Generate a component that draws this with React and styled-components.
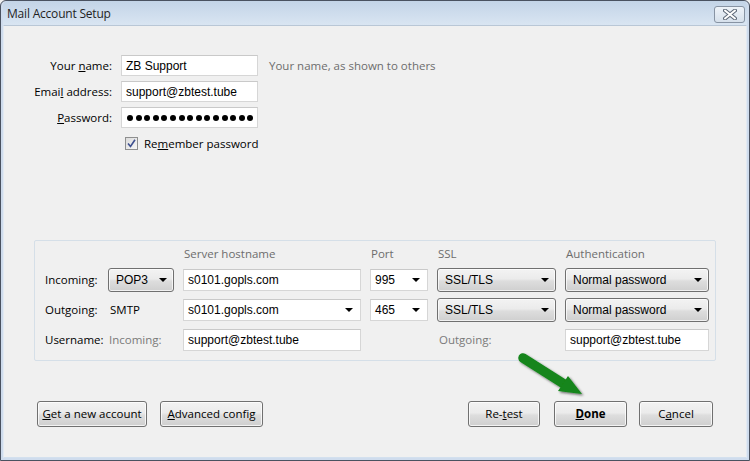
import React from "react";
import styled, { createGlobalStyle } from "styled-components";

const Global = createGlobalStyle`
  html, body { margin: 0; padding: 0; background: #f0f0f0; overflow: hidden; }
  * { box-sizing: border-box; }
`;

const UI = `"Open Sans", "Noto Sans", "Liberation Sans", sans-serif`;
const VAL = `"Liberation Sans", Arial, sans-serif`;

const Window = styled.div`
  position: relative;
  width: 750px;
  height: 461px;
  display: flex;
  flex-direction: column;
  border: 1px solid #4a5260;
  border-radius: 6px 6px 0 0;
  background: #cfdced;
  padding: 0 2px 2px 2px;
  font-family: ${UI};
  font-size: 11.5px;
  line-height: 16px;
  color: #000;
`;

const TitleBar = styled.div`
  height: 24px;
  flex: none;
  display: flex;
  align-items: center;
  justify-content: space-between;
  padding: 1px 2px 0 4px;
  background: linear-gradient(#c3d4e7, #d9e5f2);
  border-radius: 5px 5px 0 0;
`;

const Title = styled.span`
  font-size: 12px;
  color: #1f1f1f;
  letter-spacing: -0.2px;
`;

const CloseBtn = styled.div`
  width: 31px;
  height: 17px;
  margin-top: 1px;
  border: 1px solid #8793a3;
  border-radius: 3px;
  background: linear-gradient(#eef3f9, #d6e0eb);
  display: flex;
  align-items: center;
  justify-content: center;
`;

const Body = styled.div`
  flex: 1;
  background: #f0f0f0;
  border-top: 1px solid #b9c7d6;
  border-left: 1px solid #e2eaf3;
  border-right: 1px solid #e2eaf3;
  border-bottom: 1px solid #d3e0ee;
  padding: 29px 0 0 0;
  display: flex;
  flex-direction: column;
`;

const FormGrid = styled.div`
  display: grid;
  grid-template-columns: 92px 137px auto;
  grid-template-rows: repeat(4, 21px);
  column-gap: 9px;
  row-gap: 5px;
  margin-left: 16px;
  align-items: center;
`;

const Label = styled.label`
  text-align: right;
  white-space: nowrap;
  color: #000;
`;

const Hint = styled.span`
  color: #6d6d6d;
  margin-left: 2px;
  white-space: nowrap;
`;

const TextBox = styled.div`
  height: ${(p) => p.$h || 21}px;
  background: #fff;
  border: 1px solid #d6d6d6;
  border-top-color: #c9c9c9;
  display: flex;
  align-items: center;
  padding: 0 4px;
  font-family: ${VAL};
  font-size: 12px;
  color: #000;
  white-space: nowrap;
  overflow: hidden;
  justify-content: space-between;
`;

const Dots = styled.div`
  display: flex;
  gap: 2.6px;
  padding-left: 1px;
`;

const Dot = styled.span`
  width: 6px;
  height: 6px;
  border-radius: 50%;
  background: #000;
`;

const CheckRow = styled.div`
  grid-column: 2 / 4;
  display: flex;
  align-items: center;
  gap: 6px;
  padding-left: 4px;
`;

const CheckBox = styled.div`
  width: 13px;
  height: 13px;
  border: 1px solid #8e8f8f;
  background: linear-gradient(135deg, #dcdcdc, #f6f6f6);
  display: flex;
  align-items: center;
  justify-content: center;
`;

const Group = styled.div`
  margin: 86px 0 0 30px;
  width: 682px;
  border: 1px solid #d5dfe8;
  border-radius: 2px;
  padding: 5px 5px 8px 10px;
  display: grid;
  grid-template-columns: 54px 66px 178px 58px 119px 144px;
  grid-template-rows: 16px 24px 24px 24px;
  column-gap: 9px;
  row-gap: 6px;
  align-items: center;
`;

const ColHead = styled.span`
  color: #6d6d6d;
  grid-column: ${(p) => p.$col};
  padding-left: ${(p) => p.$pl || 1}px;
  white-space: nowrap;
`;

const RowLabel = styled.span`
  white-space: nowrap;
  color: ${(p) => (p.$muted ? "#7a7a7a" : "#000")};
  margin-left: ${(p) => p.$ml || 0}px;
`;

const SelectBtn = styled.div`
  height: 24px;
  border: 1px solid #707070;
  border-radius: 3px;
  background: linear-gradient(#f3f3f3 0%, #ebebeb 45%, #dddddd 55%, #cfcfcf 100%);
  box-shadow: inset 0 0 0 1px rgba(255, 255, 255, 0.7);
  display: flex;
  align-items: center;
  justify-content: space-between;
  padding: 0 6px 0 7px;
  font-family: ${VAL};
  font-size: 12px;
  white-space: nowrap;
`;

const Caret = styled.span`
  width: 0;
  height: 0;
  border-left: 4px solid transparent;
  border-right: 4px solid transparent;
  border-top: 4px solid #000;
  flex: none;
  margin-right: ${(p) => p.$mr || 0}px;
`;

const ButtonRow = styled.div`
  margin-top: 40px;
  display: flex;
  align-items: center;
  padding: 0 33px 0 33px;
`;

const Spacer = styled.div`
  flex: 1;
`;

const Button = styled.div`
  width: ${(p) => p.$w}px;
  height: 26px;
  border: 1px solid #707070;
  border-radius: 3px;
  background: linear-gradient(#f2f2f2 0%, #ebebeb 45%, #dddddd 55%, #cfcfcf 100%);
  box-shadow: inset 0 0 0 1px rgba(255, 255, 255, 0.75);
  display: flex;
  align-items: center;
  justify-content: center;
  font-weight: ${(p) => (p.$bold ? 700 : 400)};
  white-space: nowrap;
  margin-left: ${(p) => p.$ml || 0}px;
`;

const ArrowSvg = styled.svg`
  position: absolute;
  left: 510px;
  top: 345px;
  pointer-events: none;
`;

const u = (c) => <u>{c}</u>;

export default function App() {
  return (
    <>
      <Global />
      <Window>
        <TitleBar>
          <Title>Mail Account Setup</Title>
          <CloseBtn>
            <svg width="14" height="11" viewBox="0 0 14 11">
              <path d="M2 1.5 L12 9.5 M12 1.5 L2 9.5" stroke="#5d6878" strokeWidth="4" strokeLinecap="round" />
              <path d="M2 1.5 L12 9.5 M12 1.5 L2 9.5" stroke="#ffffff" strokeWidth="2" strokeLinecap="round" />
            </svg>
          </CloseBtn>
        </TitleBar>
        <Body>
          <FormGrid>
            <Label>Your {u("n")}ame:</Label>
            <TextBox>ZB Support</TextBox>
            <Hint>Your name, as shown to others</Hint>
            <Label>Emai{u("l")} address:</Label>
            <TextBox>support@zbtest.tube</TextBox>
            <span />
            <Label>{u("P")}assword:</Label>
            <TextBox aria-label="password">
              <Dots>
                {Array.from({ length: 15 }, (_, i) => (
                  <Dot key={i} />
                ))}
              </Dots>
            </TextBox>
            <span />
            <span />
            <CheckRow>
              <CheckBox>
                <svg width="9" height="9" viewBox="0 0 9 9">
                  <path d="M1 4.5 L3.5 7.5 L8 0.8" stroke="#3d4f8f" strokeWidth="1.6" fill="none" />
                </svg>
              </CheckBox>
              <span>Re{u("m")}ember password</span>
            </CheckRow>
          </FormGrid>

          <Group>
            <span />
            <span />
            <ColHead $col="3">Server hostname</ColHead>
            <ColHead $col="4">Port</ColHead>
            <ColHead $col="5">SSL</ColHead>
            <ColHead $col="6">Authentication</ColHead>

            <RowLabel>Incoming:</RowLabel>
            <SelectBtn>
              POP3 <Caret />
            </SelectBtn>
            <TextBox $h={22}>s0101.gopls.com</TextBox>
            <TextBox $h={22}>
              995 <Caret $mr={3} />
            </TextBox>
            <SelectBtn>
              SSL/TLS <Caret />
            </SelectBtn>
            <SelectBtn>
              Normal password <Caret />
            </SelectBtn>

            <RowLabel>Outgoing:</RowLabel>
            <RowLabel $ml={2}>SMTP</RowLabel>
            <TextBox $h={22}>
              s0101.gopls.com <Caret $mr={3} />
            </TextBox>
            <TextBox $h={22}>
              465 <Caret $mr={3} />
            </TextBox>
            <SelectBtn>
              SSL/TLS <Caret />
            </SelectBtn>
            <SelectBtn>
              Normal password <Caret />
            </SelectBtn>

            <RowLabel>Username:</RowLabel>
            <RowLabel $muted $ml={1}>Incoming:</RowLabel>
            <TextBox $h={22}>support@zbtest.tube</TextBox>
            <span />
            <RowLabel $muted $ml={2}>Outgoing:</RowLabel>
            <TextBox $h={22}>support@zbtest.tube</TextBox>
          </Group>

          <ButtonRow>
            <Button $w={110}>{u("G")}et a new account</Button>
            <Button $w={103} $ml={13}>{u("A")}dvanced config</Button>
            <Spacer />
            <Button $w={72}>Re-{u("t")}est</Button>
            <Button $w={73} $ml={14} $bold>
              {u("D")}one
            </Button>
            <Button $w={74} $ml={12}>C{u("a")}ncel</Button>
          </ButtonRow>
        </Body>

        <ArrowSvg width="80" height="60" viewBox="510 345 80 60">
          <defs>
            <filter id="sh" x="-30%" y="-30%" width="160%" height="160%">
              <feDropShadow dx="1.5" dy="1.5" stdDeviation="1.2" floodColor="#000" floodOpacity="0.55" />
            </filter>
          </defs>
          <g filter="url(#sh)" fill="#13851a">
            <path d="M522 357 L563 383" stroke="#13851a" strokeWidth="9.5" strokeLinecap="round" />
            <polygon points="567,375 581,393 557,390" />
          </g>
        </ArrowSvg>
      </Window>
    </>
  );
}
